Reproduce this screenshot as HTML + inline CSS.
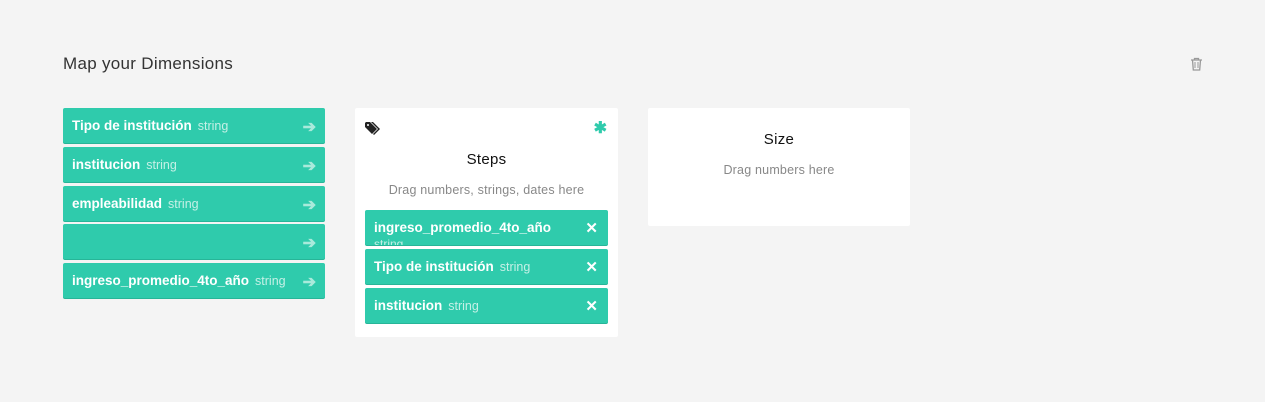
<!DOCTYPE html>
<html><head><style>
body{margin:0;width:1265px;height:402px;background:#f4f4f4;font-family:"Liberation Sans",sans-serif;position:relative;overflow:hidden}
.t{position:absolute;left:63px;top:54px;font-size:17px;color:#333;letter-spacing:0.3px}
.p{position:absolute;background:#2fcbac;border-radius:2px;height:35px;color:#fff;font-weight:bold;font-size:13.5px;box-shadow:0 1px 0 #27b598;overflow:hidden}
.p .l{position:absolute;left:9px;top:10px;white-space:nowrap}
.p .s{font-weight:normal;font-size:12.5px;color:#c5f0e6;margin-left:6px}
.p .a{position:absolute;right:9px;top:9px;color:#a9eadb;font-size:16px}
.p .x{position:absolute;right:10px;top:9px;font-size:15px;font-weight:bold}
.c{position:absolute;background:#fff;border-radius:2px}
</style></head><body>
<div class="t">Map your Dimensions</div>
<svg style="position:absolute;left:1190px;top:57px" width="13" height="14" viewBox="0 0 13 14"><path d="M1 3h11M4.5 3V1.5h4V3M2.5 3l.8 10h6.4l.8-10" fill="none" stroke="#999" stroke-width="1.3"/><path d="M5 5v6M8 5v6" stroke="#999"/></svg>

<div class="p" style="left:63px;top:108px;width:262px"><span class="l">Tipo de institución<span class="s">string</span></span><span class="a">➔</span></div>
<div class="p" style="left:63px;top:147px;width:262px"><span class="l">institucion<span class="s">string</span></span><span class="a">➔</span></div>
<div class="p" style="left:63px;top:186px;width:262px"><span class="l">empleabilidad<span class="s">string</span></span><span class="a">➔</span></div>
<div class="p" style="left:63px;top:224px;width:262px"><span class="a">➔</span></div>
<div class="p" style="left:63px;top:263px;width:262px"><span class="l">ingreso_promedio_4to_año<span class="s">string</span></span><span class="a">➔</span></div>

<div class="c" style="left:355px;top:108px;width:263px;height:229px">
<svg style="position:absolute;left:10px;top:14px" width="16" height="13" viewBox="0 0 16 13"><path d="M0 1V5l7 7 5-5-7-7H1z" fill="#222"/><path d="M6 0l7 7-5 5 1 1 6-6-7-7z" fill="#222"/><circle cx="3" cy="3" r="1" fill="#fff"/></svg>
<div style="position:absolute;right:11px;top:10px;color:#2fcbac;font-size:16px;font-weight:bold">✱</div>
<div style="position:absolute;left:0;right:0;top:43px;text-align:center;font-size:15px;color:#111;letter-spacing:0.3px">Steps</div>
<div style="position:absolute;left:0;right:0;top:75px;text-align:center;font-size:12.5px;color:#888;letter-spacing:0.2px">Drag numbers, strings, dates here</div>
</div>
<div class="p" style="left:365px;top:210px;width:243px"><span class="l">ingreso_promedio_4to_año</span><span class="l" style="top:27px;font-weight:normal;font-size:12px;color:#c5f0e6">string</span><span class="x">✕</span></div>
<div class="p" style="left:365px;top:249px;width:243px"><span class="l">Tipo de institución<span class="s">string</span></span><span class="x">✕</span></div>
<div class="p" style="left:365px;top:288px;width:243px"><span class="l">institucion<span class="s">string</span></span><span class="x">✕</span></div>

<div class="c" style="left:648px;top:108px;width:262px;height:118px">
<div style="position:absolute;left:0;right:0;top:23px;text-align:center;font-size:15px;color:#111;letter-spacing:0.3px">Size</div>
<div style="position:absolute;left:0;right:0;top:55px;text-align:center;font-size:12.5px;color:#888;letter-spacing:0.2px">Drag numbers here</div>
</div>
</body></html>
